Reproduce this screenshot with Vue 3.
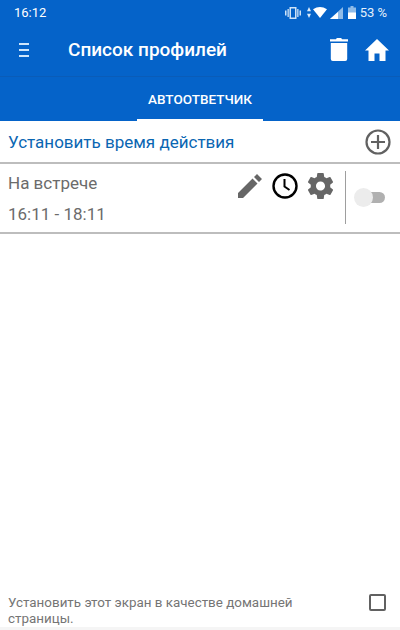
<template>
  <div class="screen">
    <header class="appbar">
      <div class="status">
        <span class="clock">16:12</span>
        <div class="status-right">
          <svg class="vibrate" width="16" height="14" viewBox="0 0 16 14" fill="#cfe3f7">
            <path d="M4.500 1h7v12h-7zM6 2.600v8.800h4V2.600zM0 4.500h1.500v5H0zM2.500 3h1.300v8H2.500zM12.200 3h1.300v8h-1.300zM14.500 4.500H16v5h-1.500z" fill-rule="evenodd" />
          </svg>
          <svg class="arrows" width="4" height="11" viewBox="0 0 4 11" fill="#dcebfa">
            <path d="M2 0l2 4.300H0zM2 11L0 6.700h4z" />
          </svg>
          <svg class="wifi" width="14" height="11" viewBox="0 0 14 11" fill="#fff">
            <path d="M0 2.300Q7-2.300 14 2.300L7 11z" />
          </svg>
          <svg class="signal" width="13" height="12" viewBox="0 0 13 12">
            <path d="M13 0v12H0z" fill="#8fbbe8" />
            <path d="M8 5v7H0z" fill="#fff" />
          </svg>
          <svg class="battery" width="8" height="13" viewBox="0 0 8 13">
            <path d="M2.500 0h3v1.500H8V13H0V1.500h2.500z" fill="#8fbbe8" />
            <path d="M0 6.500h8V13H0z" fill="#fff" />
          </svg>
          <span class="percent">53 %</span>
        </div>
      </div>

      <div class="toolbar">
        <div class="menu-icon"><span></span><span></span><span></span></div>
        <h1>Список профилей</h1>
        <svg class="trash" width="18" height="23" viewBox="0 0 18 23" fill="#fff">
          <path d="M0 1.200h6L6.800 0h4.400L12 1.200h6v2.300H0zM.8 5h16.400v16a2 2 0 0 1-2 2H2.800a2 2 0 0 1-2-2z" />
        </svg>
        <svg class="home" width="24" height="22" viewBox="0 0 24 22" fill="#fff">
          <path d="M12 0l12 11.500h-3.500V22h-6v-7.500h-5V22h-6V11.500H0z" />
        </svg>
      </div>

      <nav class="tabs">
        <div class="tab">АВТООТВЕТЧИК</div>
      </nav>
    </header>

    <div class="set-time">
      <span>Установить время действия</span>
      <svg width="26" height="26" viewBox="0 0 26 26" fill="none" stroke="#616161" stroke-width="2.200">
        <circle cx="13" cy="13" r="11.500" />
        <path d="M13 6v14M6 13h14" />
      </svg>
    </div>

    <div class="profile">
      <div class="profile-text">
        <div>{{ profile.name }}</div>
        <div>{{ profile.time }}</div>
      </div>
      <div class="profile-icons">
        <svg width="24" height="24" viewBox="0 0 24 24" fill="#666">
          <path d="M0 24v-5L14.500 4.500l5 5L5 24zM16 3l3-3 5 5-3 3z" />
        </svg>
        <svg width="26" height="26" viewBox="0 0 26 26" fill="none" stroke="#000">
          <circle cx="13" cy="13" r="11.500" stroke-width="2.400" />
          <path d="M12.500 6v7.500l5 3.500" stroke-width="2" />
        </svg>
        <svg width="25" height="26" viewBox="2.400 2 19.200 20" fill="#666">
          <path d="M19.430 12.980c.04-.32.070-.64.070-.98s-.03-.66-.07-.98l2.110-1.650c.19-.15.240-.42.120-.64l-2-3.460c-.12-.22-.39-.3-.61-.22l-2.490 1c-.52-.4-1.080-.73-1.690-.98l-.38-2.650C14.460 2.180 14.250 2 14 2h-4c-.25 0-.46.18-.49.420l-.38 2.650c-.61.25-1.170.59-1.690.98l-2.490-1c-.23-.09-.49 0-.61.220l-2 3.460c-.13.220-.07.490.12.640l2.110 1.650c-.04.320-.07.650-.07.980s.03.660.07.980l-2.110 1.650c-.19.150-.24.420-.12.640l2 3.460c.12.220.39.300.61.220l2.490-1c.52.400 1.080.730 1.690.980l.38 2.650c.03.240.24.420.49.420h4c.25 0 .46-.18.490-.42l.38-2.650c.61-.25 1.170-.59 1.690-.98l2.490 1c.23.090.49 0 .61-.22l2-3.460c.12-.22.070-.49-.12-.64l-2.110-1.650zM12 15.500c-1.930 0-3.500-1.570-3.500-3.500s1.570-3.500 3.500-3.500 3.500 1.570 3.500 3.500-1.570 3.500-3.500 3.500z" />
        </svg>
      </div>
      <div class="switch">
        <div class="track"></div>
        <div class="knob"></div>
      </div>
    </div>

    <div class="spacer"></div>

    <footer class="home-option">
      <p>Установить этот экран в качестве домашней страницы.</p>
      <div class="checkbox"></div>
    </footer>
  </div>
</template>

<script setup>
const profile = {
  name: "На встрече",
  time: "16:11 - 18:11",
};
</script>

<style>
html,
body {
  margin: 0;
  background: #fff;
}
</style>

<style scoped>
* {
  box-sizing: border-box;
}

.screen {
  display: flex;
  flex-direction: column;
  width: 400px;
  height: 630px;
  overflow: hidden;
  font-family: Roboto, sans-serif;
  background: #fff;
  border-bottom: 3px solid #f5f5f5;
}

.appbar {
  background: #0563c9;
  color: #fff;
}

.status {
  display: flex;
  align-items: center;
  justify-content: space-between;
  height: 25px;
  padding: 0 13px 0 14px;
  font-size: 13px;
}

.status-right {
  display: flex;
  align-items: center;
}

.vibrate {
  margin-right: 6px;
}

.arrows {
  margin-right: 2px;
}

.wifi {
  margin-right: 3px;
}

.signal {
  margin-right: 5px;
}

.percent {
  margin-left: 4px;
  color: #e4f0fb;
}

.toolbar {
  display: flex;
  align-items: center;
  height: 52px;
  padding-bottom: 2px;
  border-bottom: 1px solid #0a5cb8;
}

.menu-icon {
  display: flex;
  flex-direction: column;
  gap: 4px;
  width: 10px;
  margin-left: 19px;
}

.menu-icon span {
  height: 2px;
  background: #cfe6fb;
}

h1 {
  flex: 1;
  margin: 0 0 0 39px;
  font-size: 19px;
  font-weight: 500;
}

.trash {
  margin-right: 17px;
}

.home {
  margin-right: 11px;
}

.tabs {
  display: flex;
  justify-content: center;
  height: 44px;
}

.tab {
  width: 126px;
  padding-top: 14px;
  border-bottom: 2px solid #fff;
  font-size: 13.500px;
  font-weight: 500;
  text-align: center;
}

.set-time {
  display: flex;
  align-items: center;
  justify-content: space-between;
  height: 43px;
  padding: 0 9px 0 8px;
  border-bottom: 2px solid #bdbdbd;
  color: #0a66b2;
  font-size: 17px;
}

.profile {
  display: flex;
  height: 70px;
  padding-left: 8px;
  border-bottom: 2px solid #bdbdbd;
  color: #6b6b6b;
  font-size: 17px;
}

.profile-text {
  display: flex;
  flex-direction: column;
  gap: 11px;
  flex: 1;
  padding-top: 9px;
}

.profile-icons {
  display: flex;
  gap: 10px;
  height: 26px;
  margin: 9px 12px 0 0;
  align-items: center;
}

.switch {
  position: relative;
  width: 55px;
  height: 53px;
  margin-top: 7px;
  border-left: 1px solid #9e9e9e;
}

.track {
  position: absolute;
  top: 21px;
  left: 11px;
  width: 28px;
  height: 11px;
  border-radius: 6px;
  background: #b0b0b0;
}

.knob {
  position: absolute;
  top: 17px;
  left: 8px;
  width: 19px;
  height: 19px;
  border-radius: 50%;
  background: #ececec;
}

.spacer {
  flex: 1;
}

.home-option {
  display: flex;
  align-items: flex-start;
  justify-content: space-between;
  height: 39px;
  padding: 0 14px 0 8px;
  color: #757575;
}

.home-option p {
  width: 320px;
  margin: 7px 0 0;
  font-size: 13.400px;
  line-height: 16px;
}

.checkbox {
  width: 17px;
  height: 17px;
  margin-top: 6px;
  border: 2px solid #616161;
  border-radius: 2px;
}
</style>
